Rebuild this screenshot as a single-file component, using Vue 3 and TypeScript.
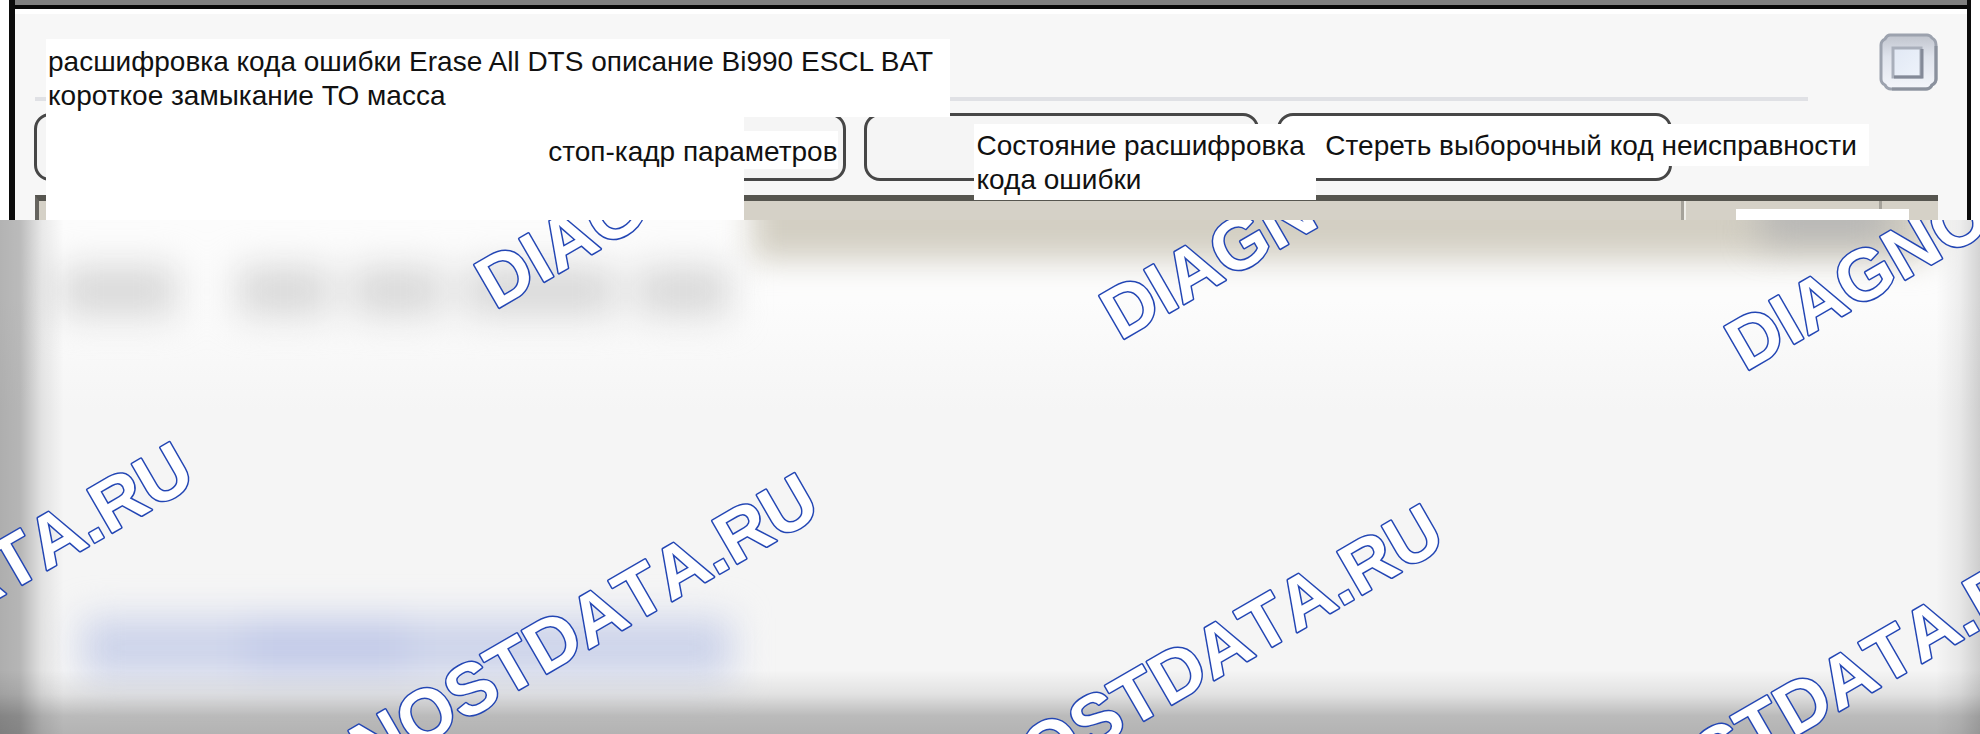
<script setup lang="ts">
import { ref } from 'vue'

interface Mark {
  x: number
  y: number
  anchor: 'start' | 'end'
}

const brand = 'DIAGNOSTDATA.RU'

const marks: Mark[] = [
  { x: 495, y: 90, anchor: 'start' },
  { x: 1120, y: 121, anchor: 'start' },
  { x: 1745, y: 152, anchor: 'start' },
  { x: 198, y: 263, anchor: 'end' },
  { x: 823, y: 294, anchor: 'end' },
  { x: 1448, y: 325, anchor: 'end' },
  { x: 2073, y: 356, anchor: 'end' },
]

const maximized = ref(false)
</script>

<template>
  <div class="page">
    <section class="window">
      <header class="head">
        <h1 class="title">
          расшифровка кода ошибки Erase All DTS описание Bi990 ESCL BAT<br />
          короткое замыкание ТО масса
        </h1>
        <button class="maximize" type="button" aria-label="Развернуть" @click="maximized = !maximized">
          <svg viewBox="0 0 60 60" width="60" height="60" aria-hidden="true">
            <defs>
              <linearGradient id="shell" x1="0" y1="0" x2="0" y2="1">
                <stop offset="0" stop-color="#c0c4cd" />
                <stop offset="0.4" stop-color="#dfe3ec" />
                <stop offset="1" stop-color="#f3f5fa" />
              </linearGradient>
              <linearGradient id="pane" x1="0" y1="0" x2="1" y2="1">
                <stop offset="0" stop-color="#e1e8f4" />
                <stop offset="1" stop-color="#eef3fb" />
              </linearGradient>
            </defs>
            <path d="M12 3H49Q52 3 54 6Q58 8 58 13V47Q58 51 54 53Q52 57 48 57H13Q9 57 7 53Q3 51 3 47V13Q3 9 7 7Q9 3 12 3Z" fill="url(#shell)" stroke="#9ca2ae" stroke-width="3" stroke-linejoin="round" />
            <path d="M58 14V47Q58 51 54 53Q52 57 48 57H14" fill="none" stroke="#8b919d" stroke-width="3" />
            <rect x="15" y="16" width="28" height="29" fill="url(#pane)" stroke="#a9afbb" stroke-width="3" />
            <path d="M44 17V45H16" fill="none" stroke="#848a98" stroke-width="3" />
          </svg>
        </button>
      </header>

      <nav class="tools">
        <button class="tool first" type="button"><span class="label">стоп-кадр параметров</span></button>
        <button class="tool second" type="button"><span class="label">Состояние расшифровка<br />кода ошибки</span></button>
        <button class="tool third" type="button"><span class="label">Стереть выборочный код неисправности</span></button>
      </nav>

      <div class="grid-head">
        <div class="cell wide"></div>
        <div class="cell mid"></div>
        <div class="cell"></div>
        <div class="plate"></div>
      </div>
      <div class="cover"></div>
    </section>

    <section class="haze">
      <div class="band"></div>
      <div class="smudge"></div>
      <div class="row gray"><i></i><i></i><i></i><i></i><i></i></div>
      <div class="row blue"><i></i><i></i><i></i><i></i></div>
      <div class="edge"></div>
      <svg class="marks" width="100%" height="100%">
        <text
          v-for="m in marks"
          :key="`${m.x}-${m.y}`"
          :text-anchor="m.anchor"
          :transform="`translate(${m.x} ${m.y}) rotate(-30)`"
        >{{ brand }}</text>
      </svg>
    </section>
  </div>
</template>

<style>
body {
  margin: 0;
}
</style>

<style scoped>
.page {
  display: flex;
  flex-direction: column;
  min-height: 100vh;
  overflow: hidden;
  background: #fff;
  color: #111;
  font-family: "Liberation Sans", Arial, sans-serif;
  font-size: 28px;
  line-height: 34px;
}
.window {
  position: relative;
  box-sizing: border-box;
  height: 220px;
  margin: 0 9px;
  border-left: 6px solid #0c0c0c;
  border-right: 4px solid #0c0c0c;
  background: linear-gradient(#808080 5px, #0a0a0a 5px, #0a0a0a 9px, #fff 9px, #fff 14px, #f7f7f7 14px);
}
.head {
  position: relative;
  z-index: 5;
  display: flex;
  justify-content: space-between;
  align-items: flex-start;
  height: 113px;
  padding: 0 29px 0 31px;
  box-sizing: border-box;
}
.head::before {
  content: "";
  position: absolute;
  left: 20px;
  right: 159px;
  top: 97px;
  height: 4px;
  background: #e0e1e5;
}
.title {
  position: relative;
  margin: 39px 0 0;
  padding: 6px 0 3px 2px;
  width: 904px;
  height: 78px;
  box-sizing: border-box;
  background: #fff;
  font-size: inherit;
  font-weight: 400;
  white-space: nowrap;
}
.maximize {
  margin-top: 32px;
  padding: 0;
  border: 0;
  background: none;
}
.maximize svg {
  display: block;
}
.tools {
  display: grid;
  grid-template-columns: 812fr 396fr 395fr 248fr;
  grid-template-rows: 68px;
  column-gap: 18px;
  margin: 0 29px 0 19px;
}
.tool {
  position: relative;
  display: flex;
  align-items: flex-start;
  padding: 0;
  border: 3px solid #474747;
  border-radius: 16px;
  background: #f5f5f5;
  color: inherit;
  font: inherit;
  text-align: left;
  white-space: nowrap;
  min-width: 0;
}
.label {
  position: relative;
  z-index: 1;
  background: #fff;
}
.first {
  z-index: 3;
  justify-content: flex-end;
  padding: 15px 5px 0 0;
}
.first .label {
  padding-top: 4px;
}
.first::before {
  content: "";
  position: absolute;
  left: 400px;
  right: 99px;
  top: 0;
  bottom: -3px;
  background: #fff;
}
.second {
  z-index: 2;
}
.second .label {
  flex: none;
  margin: 8px 0 0 107px;
  padding: 5px 0 3px 3px;
  width: 342px;
  height: 76px;
  box-sizing: border-box;
}
.third {
  z-index: 1;
  background: #fff;
}
.third .label {
  flex: none;
  margin: 8px 0 0 41px;
  padding: 5px 6px 3px 4px;
  width: 548px;
  height: 42px;
  box-sizing: border-box;
}
.grid-head {
  position: relative;
  display: flex;
  height: 19px;
  margin: 14px 29px 0 20px;
  border-top: 6px solid #56554f;
  border-left: 4px solid #66645f;
  background: #d5d1c7;
}
.cell {
  box-sizing: border-box;
  flex: 56;
}
.wide {
  flex: 1648;
  border-right: 3px solid #a5a29a;
}
.mid {
  flex: 194;
  border-left: 2px solid #efeee9;
  border-right: 3px solid #a5a29a;
}
.plate {
  position: absolute;
  right: 29px;
  top: 8px;
  width: 173px;
  height: 11px;
  background: #fff;
}
.cover {
  position: absolute;
  left: 31px;
  top: 116px;
  width: 500px;
  height: 104px;
  z-index: 4;
  background: #fff;
}
.cover::after {
  content: "";
  position: absolute;
  left: 100%;
  bottom: 0;
  width: 198px;
  height: 46px;
  background: inherit;
}
.haze {
  position: relative;
  flex: 1;
  min-height: 514px;
  overflow: hidden;
  background: linear-gradient(#fcfcfc 80px, #f5f5f5 190px);
}
.band {
  position: absolute;
  left: 752px;
  right: 50px;
  top: -60px;
  height: 100px;
  background: #d3cfc3;
  filter: blur(15px);
}
.smudge {
  position: absolute;
  right: 90px;
  top: -24px;
  width: 130px;
  height: 44px;
  background: #b4b4b4;
  filter: blur(18px);
}
.row {
  position: absolute;
  display: flex;
}
.gray {
  left: 60px;
  top: 46px;
  width: 670px;
  height: 50px;
  gap: 20px;
  filter: blur(18px);
}
.gray i {
  flex: 80;
  background: #d8d8d8;
}
.gray i:nth-child(1) {
  flex: 100;
  margin-right: 40px;
}
.gray i:nth-child(4) {
  flex: 130;
}
.blue {
  left: 82px;
  top: 398px;
  width: 650px;
  height: 60px;
  filter: blur(18px);
}
.blue i {
  flex: 1;
  background: #ccd3ea;
}
.blue i:nth-child(2) {
  background: #c2cae8;
}
.edge {
  position: absolute;
  inset: -40px 0 0;
  background:
    linear-gradient(to top, rgba(0, 0, 0, 0.27), rgba(0, 0, 0, 0.24) 18px, rgba(0, 0, 0, 0.08) 40px, transparent 64px),
    linear-gradient(to right, rgba(0, 0, 0, 0.29), rgba(0, 0, 0, 0.26) 20px, rgba(0, 0, 0, 0.08) 42px, transparent 64px),
    linear-gradient(to left, rgba(0, 0, 0, 0.16), rgba(0, 0, 0, 0.06) 20px, transparent 44px);
}
.marks {
  position: absolute;
  inset: 0;
}
.marks text {
  fill: #fff;
  stroke: #2346b4;
  stroke-width: 3px;
  stroke-linejoin: round;
  paint-order: stroke;
  font-size: 72px;
  font-weight: 700;
  font-kerning: none;
}
</style>
